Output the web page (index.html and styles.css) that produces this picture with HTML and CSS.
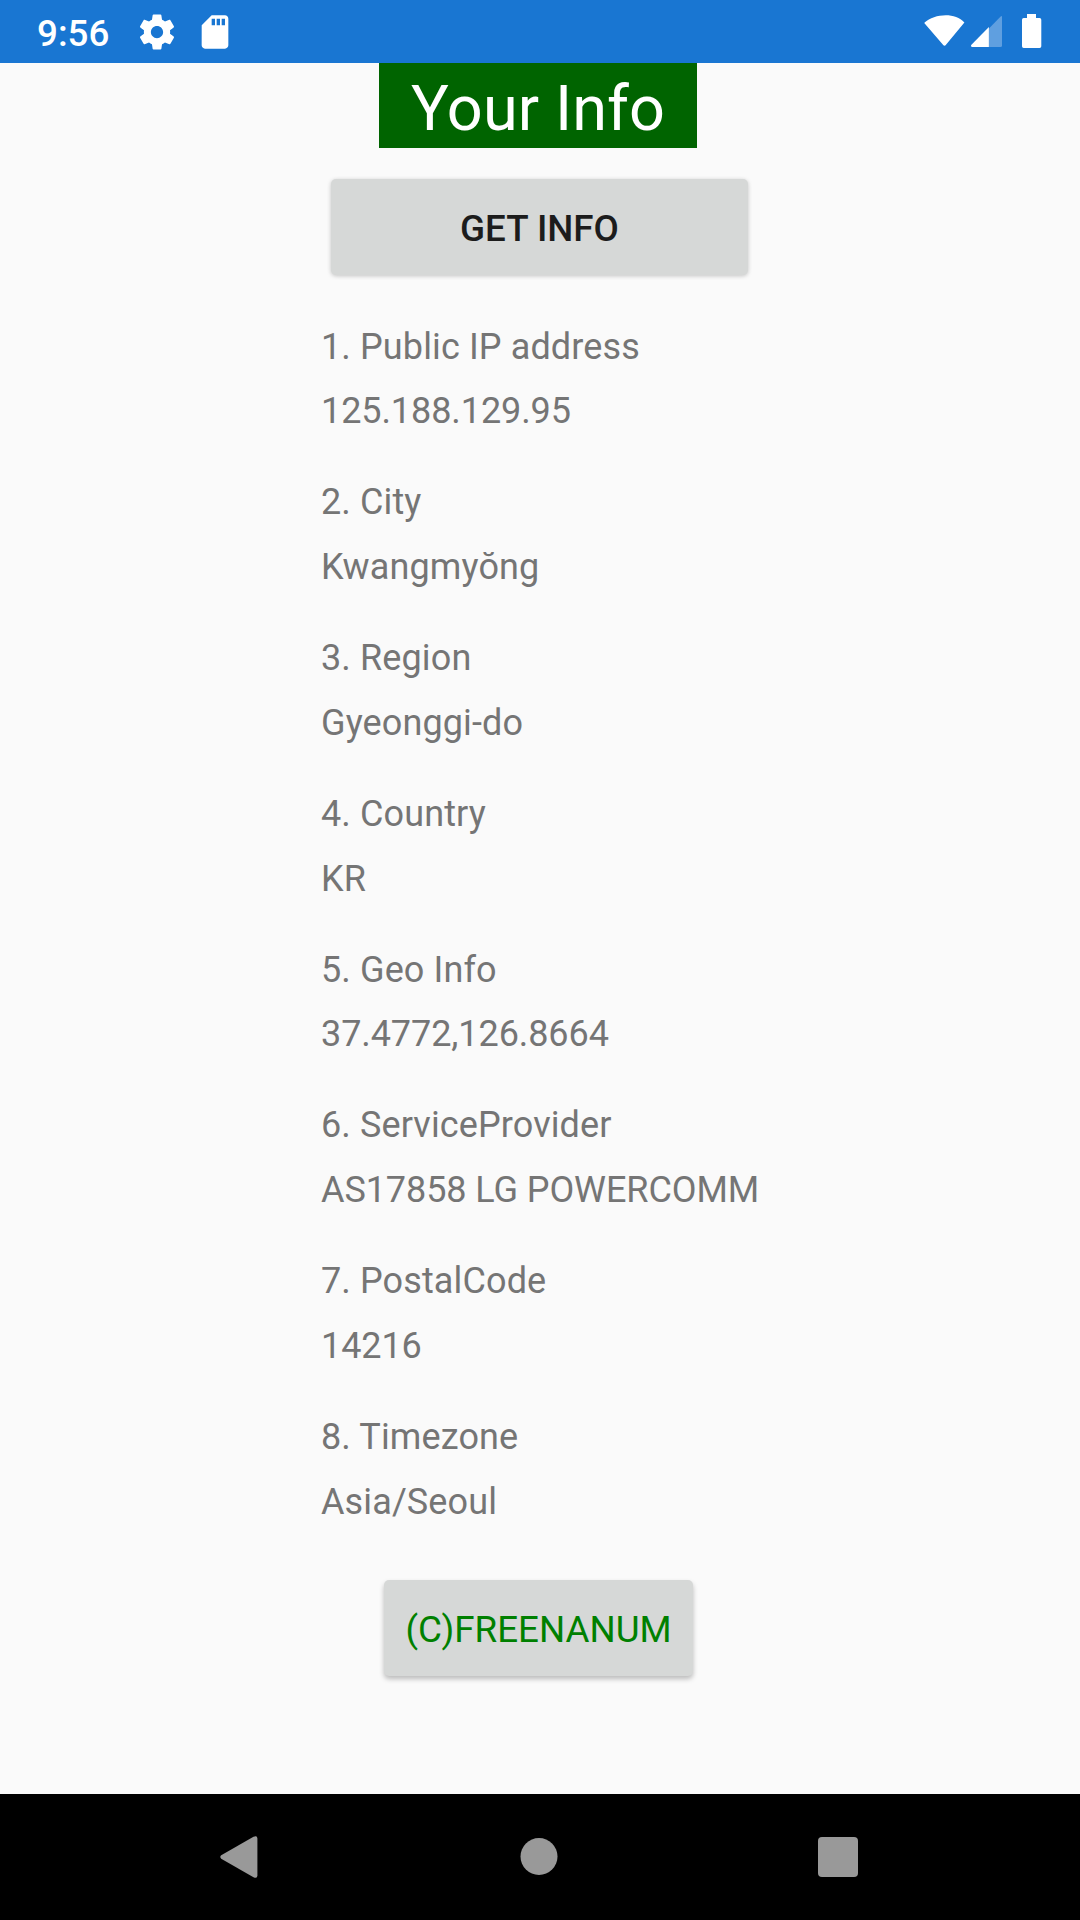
FILE: index.html
```html
<!DOCTYPE html>
<html lang="en">
<head>
<meta charset="utf-8">
<title>Your Info</title>
<link rel="stylesheet" href="styles.css">
</head>
<body>
<div class="screen">
  <header class="status-bar">
    <span class="clock">9:56</span>
    <svg class="gear" width="42" height="42" viewBox="0 0 24 24"><path fill="#fff" d="M19.43 12.98c.04-.32.07-.64.07-.98s-.03-.66-.07-.98l2.11-1.65c.19-.15.24-.42.12-.64l-2-3.46c-.12-.22-.39-.3-.61-.22l-2.49 1c-.52-.4-1.08-.73-1.69-.98l-.38-2.65C14.46 2.18 14.25 2 14 2h-4c-.25 0-.46.18-.49.42l-.38 2.65c-.61.25-1.17.59-1.69.98l-2.49-1c-.23-.09-.49 0-.61.22l-2 3.46c-.13.22-.07.49.12.64l2.11 1.65c-.04.32-.07.65-.07.98s.03.66.07.98l-2.11 1.65c-.19.15-.24.42-.12.64l2 3.46c.12.22.39.3.61.22l2.49-1c.52.4 1.08.73 1.69.98l.38 2.65c.03.24.24.42.49.42h4c.25 0 .46-.18.49-.42l.38-2.65c.61-.25 1.17-.59 1.69-.98l2.49 1c.23.09.49 0 .61-.22l2-3.46c.12-.22.07-.49-.12-.64l-2.11-1.65zM12 15.5c-1.93 0-3.5-1.57-3.5-3.5s1.57-3.5 3.5-3.5 3.5 1.57 3.5 3.5-1.57 3.5-3.5 3.5z"/></svg>
    <svg class="sd-card" width="40" height="40" viewBox="0 0 24 24"><path fill="#fff" d="M18 2h-8L4.02 8 4 20c0 1.100.9 2 2 2h12c1.100 0 2-.9 2-2V4c0-1.100-.9-2-2-2zm-6 6h-2V4h2v4zm3 0h-2V4h2v4zm3 0h-2V4h2v4z"/></svg>
    <svg class="signals" width="120" height="36" viewBox="0 0 120 36">
      <path fill="#fff" d="M.6 8.500C10-.2 31-2.400 40.400 8.500L22 30.800Q20.500 32.500 19 30.800L.9 9.800Q.2 9 .6 8.500z"/>
      <path fill="#5f9fe0" d="M64.900 14.500L76.400 2.700Q78 1.400 78 3V31.500Q78 33 76.500 33H64.900z"/>
      <path fill="#fff" d="M64.900 13V33H48Q46.200 32.600 47.200 31z"/>
      <path fill="#fff" d="M103 0h9v4h3.600q1.700 0 1.700 1.700v26.600q0 1.700-1.700 1.700H99.700q-1.700 0-1.700-1.700V5.700Q98 4 99.700 4H103z"/>
    </svg>
  </header>
  <main class="content">
    <h1 class="title">Your Info</h1>
    <button class="button get-info">GET INFO</button>
    <dl class="info">
      <div class="entry"><dt>1. Public IP address</dt><dd class="code">125.188.129.95</dd></div>
      <div class="entry"><dt>2. City</dt><dd>Kwangmyŏng</dd></div>
      <div class="entry"><dt>3. Region</dt><dd>Gyeonggi-do</dd></div>
      <div class="entry"><dt>4. Country</dt><dd>KR</dd></div>
      <div class="entry"><dt>5. Geo Info</dt><dd class="code">37.4772,126.8664</dd></div>
      <div class="entry"><dt>6. ServiceProvider</dt><dd class="code">AS17858 LG POWERCOMM</dd></div>
      <div class="entry"><dt>7. PostalCode</dt><dd class="code">14216</dd></div>
      <div class="entry"><dt>8. Timezone</dt><dd>Asia/Seoul</dd></div>
    </dl>
    <button class="button credit">(C)FREENANUM</button>
  </main>
  <nav class="nav-bar">
    <svg width="38" height="42" viewBox="0 0 38 42"><path fill="#999" d="M1.200 19.300L33.500.800Q37.400-.8 37.400 2.500V39.500Q37.400 42.800 33.500 41.200L1.200 22.700Q-.6 21 1.200 19.300z"/></svg>
    <svg width="40" height="38" viewBox="0 0 40 38"><circle cx="21" cy="18.500" r="18.500" fill="#999"/></svg>
    <svg width="40" height="40" viewBox="0 0 40 40"><rect width="40" height="40" rx="4" fill="#999"/></svg>
  </nav>
</div>
</body>
</html>
```
FILE: styles.css
```css
* { box-sizing: border-box; }
body {
  margin: 0;
  background: #fafafa;
  font-family: Roboto, "Noto Sans", sans-serif;
}
.screen {
  width: 1080px;
  height: 1920px;
  display: flex;
  flex-direction: column;
}
.status-bar {
  height: 63px;
  background: #1976d2;
  color: #fff;
  display: flex;
  align-items: flex-start;
  padding: 0 36px 0 37px;
}
.clock {
  font-size: 36.75px;
  font-weight: 500;
  line-height: 43px;
  padding-top: 12px;
  width: 73px;
}
.gear { margin: 11px 0 0 26px; }
.sd-card { margin: 12px 0 0 17px; }
.signals { margin: 14px 0 0 auto; }
.content {
  flex: 1;
  display: flex;
  flex-direction: column;
  align-items: center;
}
.title {
  margin: 0 4px 0 0;
  width: 318px;
  height: 85px;
  line-height: 92px;
  background: #006400;
  color: #fff;
  font-size: 63px;
  font-weight: 400;
  letter-spacing: 0.1px;
  text-align: center;
}
.button {
  height: 96px;
  padding: 2px 0 0;
  border: 0;
  border-radius: 5px;
  background: #d6d8d7;
  font-family: inherit;
  font-size: 36.75px;
}
.get-info {
  width: 417px;
  margin: 31px 1px 0 0;
  color: #1c1c1c;
  font-weight: 500;
  box-shadow: 0 1px 4px rgba(0, 0, 0, 0.22);
}
.info {
  width: 438px;
  margin: 46.65px 0 0;
  color: #757575;
  font-size: 36px;
  line-height: 50px;
  letter-spacing: 0.12px;
  white-space: nowrap;
}
.entry { height: 155.74px; }
.entry dt { margin: 0; height: 64.78px; }
.entry dd { margin: 0; }
.entry .code { letter-spacing: -0.08px; }
.credit {
  width: 309px;
  margin: 12.4px 3px 0 0;
  padding-top: 3px;
  color: #008000;
  box-shadow: 0 3px 5px rgba(0, 0, 0, 0.25);
}
.nav-bar {
  height: 126px;
  background: #000;
  display: flex;
  justify-content: space-between;
  align-items: center;
  padding: 0 222px 0 220px;
}
```
